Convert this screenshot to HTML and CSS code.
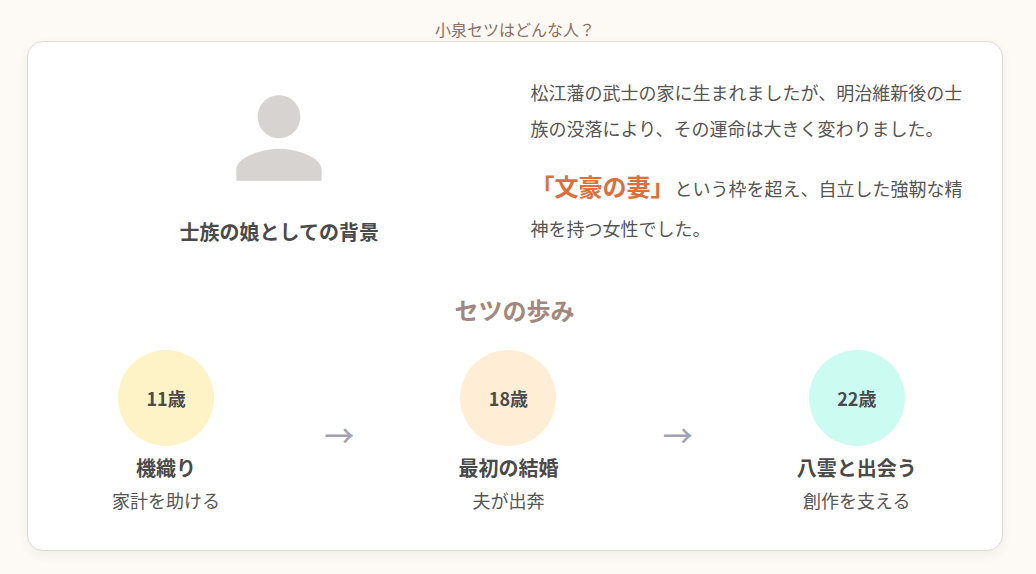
FILE: index.html
```html
<!DOCTYPE html>
<html lang="ja">
<head>
<meta charset="utf-8">
<title>小泉セツはどんな人？</title>
<link rel="stylesheet" href="styles.css">
</head>
<body>
<main class="page">
  <h1 class="page-title">小泉セツはどんな人？</h1>
  <section class="card">
    <div class="intro">
      <div class="portrait">
        <svg class="person" viewBox="0 0 24 24" aria-hidden="true"><path d="M12 12c2.21 0 4-1.79 4-4s-1.79-4-4-4-4 1.79-4 4 1.79 4 4 4zm0 2c-2.67 0-8 1.34-8 4v2h16v-2c0-2.66-5.33-4-8-4z"/></svg>
        <p class="portrait-label">士族の娘としての背景</p>
      </div>
      <div class="story">
        <p>松江藩の武士の家に生まれましたが、明治維新後の士族の没落により、その運命は大きく変わりました。</p>
        <p class="story-next"><strong class="accent">「文豪の妻」</strong>という枠を超え、自立した強靭な精神を持つ女性でした。</p>
      </div>
    </div>
    <h2 class="steps-title">セツの歩み</h2>
    <div class="steps">
      <div class="step">
        <div class="age age-yellow">11歳</div>
        <p class="step-name">機織り</p>
        <p class="step-desc">家計を助ける</p>
      </div>
      <div class="arrow">→</div>
      <div class="step">
        <div class="age age-orange">18歳</div>
        <p class="step-name">最初の結婚</p>
        <p class="step-desc">夫が出奔</p>
      </div>
      <div class="arrow">→</div>
      <div class="step">
        <div class="age age-teal">22歳</div>
        <p class="step-name">八雲と出会う</p>
        <p class="step-desc">創作を支える</p>
      </div>
    </div>
  </section>
</main>
</body>
</html>
```
FILE: styles.css
```css
* { box-sizing: border-box; }
html, body { margin: 0; padding: 0; }
body {
  background: #fdfaf5;
  color: #4a4a4a;
  font-family: "Noto Sans CJK JP", "Noto Sans", sans-serif;
}
p, h1, h2 { margin: 0; }
.page {
  height: 574px;
  overflow: hidden;
  padding: 17px 33px 0 27px;
}
.page-title {
  font-size: 16px;
  line-height: 24px;
  font-weight: 400;
  text-align: center;
  color: #8d6e63;
}
.card {
  background: #fff;
  border: 1px solid #e0dbd0;
  border-radius: 16px;
  box-shadow: 0 4px 12px rgba(0, 0, 0, 0.05);
  padding: 32px;
  height: 510px;
}
.intro {
  display: grid;
  grid-template-columns: 1fr 1fr;
  gap: 32px;
  margin-right: 1px;
}
.portrait {
  display: flex;
  flex-direction: column;
  align-items: center;
}
.person {
  width: 128px;
  height: 128px;
  fill: #d6d3d1;
  display: block;
}
.portrait-label {
  margin-top: 16px;
  font-size: 20px;
  line-height: 28px;
  font-weight: 700;
}
.story {
  font-size: 18px;
  line-height: 2;
  color: #555;
}
.story-next { margin-top: 16px; }
.accent {
  font-size: 24px;
  font-weight: 700;
  color: #dd6f3a;
}
.steps-title {
  margin: 48px 1px 24px 0;
  font-size: 24px;
  line-height: 32px;
  font-weight: 700;
  text-align: center;
  color: #a1887f;
}
.steps {
  display: flex;
  justify-content: space-around;
  align-items: center;
  margin-right: 1px;
}
.step {
  display: flex;
  flex-direction: column;
  align-items: center;
}
.age {
  width: 96px;
  height: 96px;
  border-radius: 50%;
  display: flex;
  align-items: center;
  justify-content: center;
  font-size: 18px;
  line-height: 28px;
  font-weight: 700;
}
.age-yellow { background: #fef3c7; }
.age-orange { background: #ffedd5; }
.age-teal { background: #ccfbf1; }
.step-name {
  margin-top: 8px;
  font-size: 20px;
  line-height: 28px;
  font-weight: 700;
}
.step-desc {
  margin-top: 4px;
  font-size: 18px;
  line-height: 28px;
  color: #555;
}
.arrow {
  font-size: 30px;
  line-height: 36px;
  font-weight: 500;
  padding-top: 4px;
  color: #a3a3b5;
}
```
